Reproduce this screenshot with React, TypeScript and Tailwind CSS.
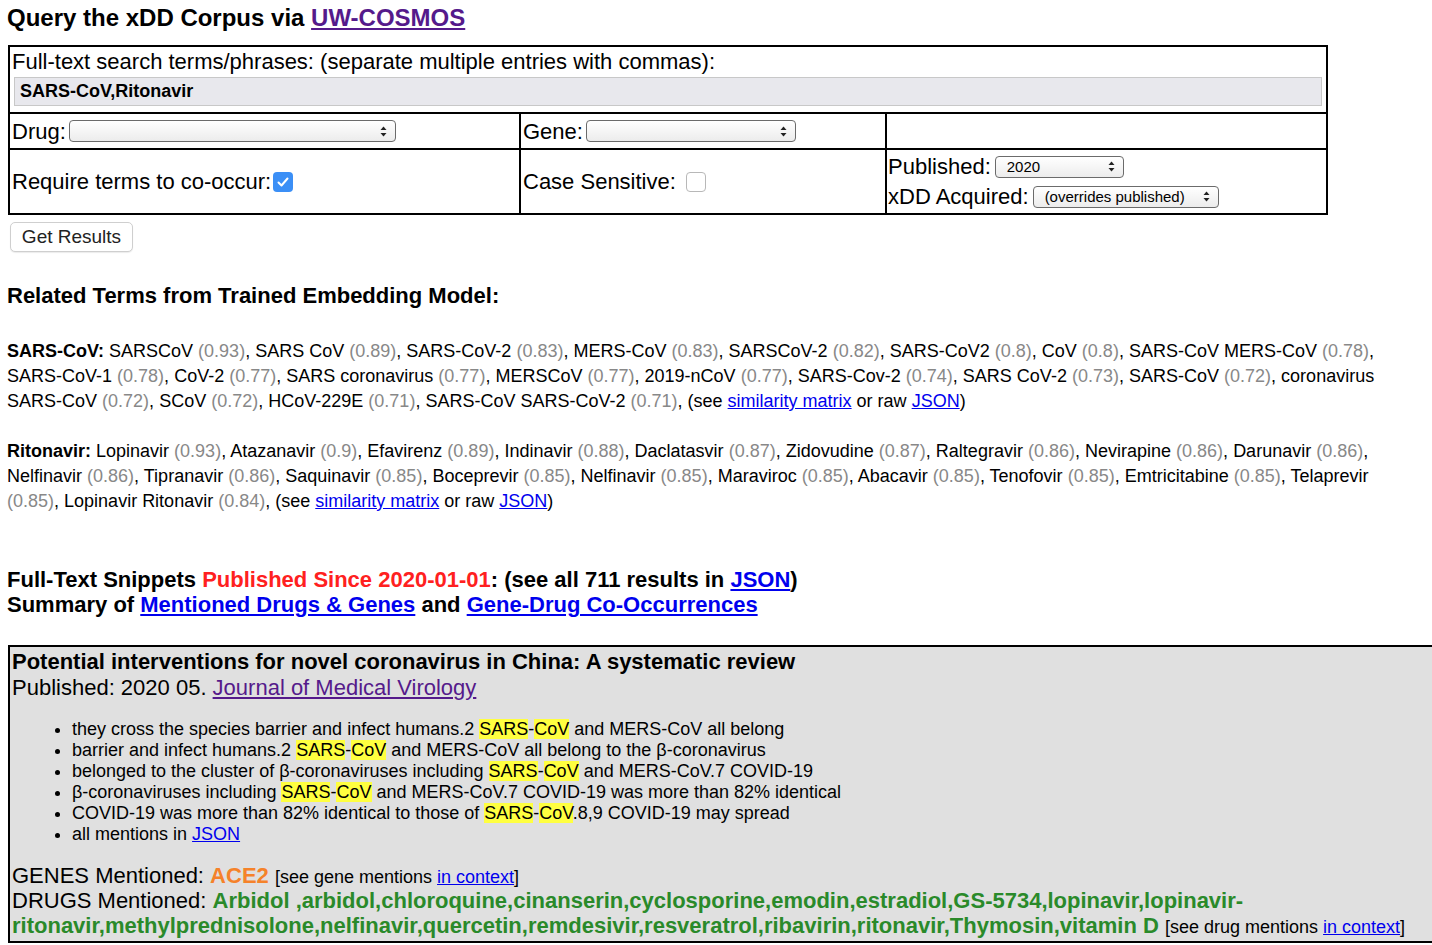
import React from 'react';

const font = { fontFamily: '"Liberation Sans", Arial, Helvetica, sans-serif' };

const sarsTerms: [string, string][] = [
  ['SARSCoV', '0.93'], ['SARS CoV', '0.89'], ['SARS-CoV-2', '0.83'], ['MERS-CoV', '0.83'],
  ['SARSCoV-2', '0.82'], ['SARS-CoV2', '0.8'], ['CoV', '0.8'], ['SARS-CoV MERS-CoV', '0.78'],
  ['SARS-CoV-1', '0.78'], ['CoV-2', '0.77'], ['SARS coronavirus', '0.77'], ['MERSCoV', '0.77'],
  ['2019-nCoV', '0.77'], ['SARS-Cov-2', '0.74'], ['SARS CoV-2', '0.73'], ['SARS-CoV', '0.72'],
  ['coronavirus SARS-CoV', '0.72'], ['SCoV', '0.72'], ['HCoV-229E', '0.71'], ['SARS-CoV SARS-CoV-2', '0.71'],
];

const ritonavirTerms: [string, string][] = [
  ['Lopinavir', '0.93'], ['Atazanavir', '0.9'], ['Efavirenz', '0.89'], ['Indinavir', '0.88'],
  ['Daclatasvir', '0.87'], ['Zidovudine', '0.87'], ['Raltegravir', '0.86'], ['Nevirapine', '0.86'],
  ['Darunavir', '0.86'], ['Nelfinavir', '0.86'], ['Tipranavir', '0.86'], ['Saquinavir', '0.85'],
  ['Boceprevir', '0.85'], ['Nelfinavir', '0.85'], ['Maraviroc', '0.85'], ['Abacavir', '0.85'],
  ['Tenofovir', '0.85'], ['Emtricitabine', '0.85'], ['Telaprevir', '0.85'], ['Lopinavir Ritonavir', '0.84'],
];

const narrow = { fontFamily: '"Liberation Sans Narrow", "Liberation Sans", Arial, sans-serif' };

function FakeSelect({ value, className }: { value?: string; className: string }) {
  return (
    <span
      className={`inline-flex items-center justify-between rounded-[4px] border border-[#6b6b6b] bg-gradient-to-b from-white to-[#ececec] pl-[11px] pr-[8px] text-[15px] leading-none text-black align-middle ${className}`}
    >
      <span>{value}</span>
      <svg width="7" height="11" viewBox="0 0 7 11">
        <path d="M3.5 0.5 L6.5 4 L0.5 4 Z" fill="#222" />
        <path d="M3.5 10.5 L6.5 7 L0.5 7 Z" fill="#222" />
      </svg>
    </span>
  );
}

function TermList({ head, terms }: { head: string; terms: [string, string][] }) {
  return (
    <p className="text-[18px] leading-[25px]">
      <b>{head}:</b>{' '}
      {terms.map(([t, s], i) => (
        <React.Fragment key={i}>
          {t} <span className="text-[#888]">({s})</span>,{' '}
        </React.Fragment>
      ))}
      (see <a className="text-[#0000ee] underline">similarity matrix</a> or raw{' '}
      <a className="text-[#0000ee] underline">JSON</a>)
    </p>
  );
}

function Hl({ children }: { children: React.ReactNode }) {
  return <span className="bg-[#ffff40]">{children}</span>;
}

function SarsCov() {
  return (
    <>
      <Hl>SARS</Hl>-<Hl>CoV</Hl>
    </>
  );
}

export default function App() {
  return (
    <div className="overflow-x-hidden bg-white text-black" style={font}>
      <div className="px-2">
        <h2 className="pt-[4px] text-[24px] font-bold leading-[28px] -ml-[1px]">
          Query the xDD Corpus via <a className="text-[#551a8b] underline">UW-COSMOS</a>
        </h2>

        <div className="mt-[13px] w-[1320px] border-2 border-black text-[22px]">
          <div className="border-b-2 border-black px-[2px] pb-[6px]">
            <div className="pt-[3px] leading-[24px]">Full-text search terms/phrases: (separate multiple entries with commas):</div>
            <div className="mx-[2px] mt-[3px] flex h-[29px] items-center border border-[#c8c8c8] bg-[#e8e8ed] px-[5px] text-[18px] font-bold">
              SARS-CoV,Ritonavir
            </div>
          </div>
          <div className="flex h-[36px] border-b-2 border-black">
            <div className="flex w-[511px] items-center border-r-2 border-black pl-[2px]">
              Drug:<FakeSelect className="ml-[3px] h-[22px] w-[327px]" />
            </div>
            <div className="flex w-[366px] items-center border-r-2 border-black pl-[2px]">
              Gene:<FakeSelect className="ml-[3px] h-[22px] w-[210px]" />
            </div>
            <div className="flex-1" />
          </div>
          <div className="flex h-[63px]">
            <div className="flex w-[511px] items-center border-r-2 border-black pl-[2px]">
              Require terms to co-occur:
              <span className="ml-[2px] flex h-[20px] w-[20px] items-center justify-center rounded-[4px] bg-[#3b8ff6]">
                <svg width="14" height="14" viewBox="0 0 14 14">
                  <path d="M2.5 7.5 L5.5 10.5 L11.5 3.5" fill="none" stroke="white" strokeWidth="2" strokeLinecap="round" strokeLinejoin="round" />
                </svg>
              </span>
            </div>
            <div className="flex w-[366px] items-center border-r-2 border-black pl-[2px]">
              Case Sensitive:
              <span className="ml-[10px] h-[20px] w-[20px] rounded-[4px] border border-[#b8b8b8] bg-white" />
            </div>
            <div className="flex flex-1 flex-col justify-center pl-[1px] leading-[30px]">
              <div className="flex items-center">
                Published:<FakeSelect value="2020" className="ml-[4px] h-[22px] w-[129px]" />
              </div>
              <div className="flex items-center">
                xDD Acquired:<FakeSelect value="(overrides published)" className="ml-[4px] h-[22px] w-[186px]" />
              </div>
            </div>
          </div>
        </div>

        <button className="mt-[7px] ml-[2px] h-[30px] w-[123px] rounded-[5px] border border-[#cfcfcf] bg-white text-[19px] text-[#222] shadow-[0_1px_1px_rgba(0,0,0,0.08)]">
          Get Results
        </button>

        <h3 className="mt-[31px] text-[22px] font-bold leading-[25px] -ml-[1px]">Related Terms from Trained Embedding Model:</h3>

        <div className="mt-[31px] -ml-[1px]">
          <TermList head="SARS-CoV" terms={sarsTerms} />
          <div className="h-[25px]" />
          <TermList head="Ritonavir" terms={ritonavirTerms} />
        </div>

        <div className="mt-[53px] text-[22px] font-bold leading-[25px] -ml-[1px]">
          <div>
            Full-Text Snippets <span className="text-[#ff2020]">Published Since 2020-01-01</span>: (see all 711 results in{' '}
            <a className="text-[#0000ee] underline">JSON</a>)
          </div>
          <div>
            Summary of <a className="text-[#0000ee] underline">Mentioned Drugs &amp; Genes</a> and{' '}
            <a className="text-[#0000ee] underline">Gene-Drug Co-Occurrences</a>
          </div>
        </div>

        <div className="mt-[28px] w-[1440px] border-2 border-black bg-[#e0e0e0] px-[2px] pb-[3px]">
          <div className="pt-[2px] text-[22px] font-bold leading-[26px]">
            Potential interventions for novel coronavirus in China: A systematic review
          </div>
          <div className="text-[22px] leading-[26px]">
            Published: 2020 05. <a className="text-[#551a8b] underline">Journal of Medical Virology</a>
          </div>
          <ul className="mt-[18px] list-disc pl-[60px] text-[18px] leading-[21px]">
            <li>they cross the species barrier and infect humans.2 <SarsCov /> and MERS-CoV all belong</li>
            <li>barrier and infect humans.2 <SarsCov /> and MERS-CoV all belong to the β-coronavirus</li>
            <li>belonged to the cluster of β-coronaviruses including <SarsCov /> and MERS-CoV.7 COVID-19</li>
            <li>β-coronaviruses including <SarsCov /> and MERS-CoV.7 COVID-19 was more than 82% identical</li>
            <li>COVID-19 was more than 82% identical to those of <SarsCov />.8,9 COVID-19 may spread</li>
            <li>
              all mentions in <a className="text-[#0000ee] underline">JSON</a>
            </li>
          </ul>
          <div className="mt-[19px] text-[22px] leading-[24px]">
            GENES Mentioned: <b className="text-[#f5822a]">ACE2</b>{' '}
            <span className="text-[18px] leading-none" style={narrow}>
              [see gene mentions <a className="text-[#0000ee] underline">in context</a>]
            </span>
          </div>
          <div className="w-[1400px] text-[22px] leading-[25px]">
            DRUGS Mentioned:{' '}
            <b className="text-[#2a8a2a]">
              Arbidol ,arbidol,chloroquine,cinanserin,cyclosporine,emodin,estradiol,GS-5734,lopinavir,lopinavir-ritonavir,methylprednisolone,nelfinavir,quercetin,remdesivir,resveratrol,ribavirin,ritonavir,Thymosin,vitamin D
            </b>{' '}
            <span className="text-[18px] leading-none" style={narrow}>
              [see drug mentions <a className="text-[#0000ee] underline">in context</a>]
            </span>
          </div>
        </div>
      </div>
    </div>
  );
}
